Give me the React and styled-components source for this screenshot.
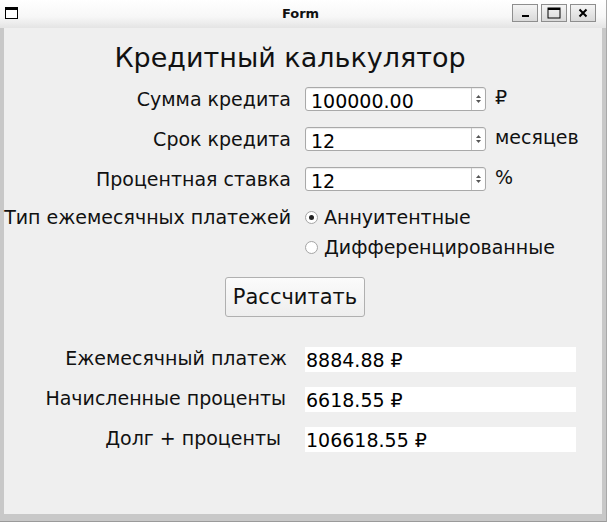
import React from 'react'
import styled, { createGlobalStyle } from 'styled-components'

const GlobalStyle = createGlobalStyle`
  html, body { margin: 0; padding: 0; background: #ffffff; }
  body { font-family: "DejaVu Sans", "Liberation Sans", sans-serif; color: #000; }
`

const Window = styled.div`
  width: 607px;
  height: 522px;
  display: flex;
  flex-direction: column;
  background: #c8c8c8;
  box-sizing: border-box;
  border-bottom: 1px solid #9a9a9a;
  border-right: 1px solid #a8a8a8;
`

const TitleBar = styled.div`
  height: 28px;
  flex: 0 0 28px;
  display: grid;
  grid-template-columns: 1fr auto 1fr;
  align-items: center;
  background: linear-gradient(#ffffff 0%, #f7f7f7 60%, #e4e4e4 100%);
  box-sizing: border-box;
  padding: 0 10px 0 5px;
`

const AppIcon = styled.div`
  width: 13px;
  height: 12px;
  box-sizing: border-box;
  border: 1px solid #000;
  border-top-width: 3px;
  background: #fff;
  margin-top: -2px;
`

const Caption = styled.div`
  font-size: 13px;
  font-weight: bold;
  color: #111;
  margin-top: -2px;
`

const Controls = styled.div`
  justify-self: end;
  display: flex;
  gap: 3px;
  margin-top: -2px;
`

const CtlButton = styled.div`
  width: 26px;
  height: 18px;
  box-sizing: border-box;
  border: 1px solid #8e8e8e;
  background: linear-gradient(#f4f4f4, #d9d9d9);
  display: flex;
  align-items: center;
  justify-content: center;
`

const Body = styled.div`
  flex: 1;
  margin: 0 4px 7px 4px;
  background: #efefef;
  display: flex;
  flex-direction: column;
  padding-top: 14px;
`

const Heading = styled.h1`
  margin: 0;
  font-weight: normal;
  font-size: 27px;
  line-height: 32px;
  text-align: center;
  padding-right: 26px;
  color: #111;
`

const Form = styled.div`
  display: grid;
  grid-template-columns: 287px 181px 1fr;
  column-gap: 14px;
  row-gap: 16px;
  margin-top: 13px;
`

const Label = styled.div`
  font-size: 19px;
  text-align: right;
  white-space: nowrap;
  align-self: ${p => (p.$top ? 'start' : 'center')};
  line-height: 20px;
  color: #111;
`

const Row = styled.div`
  display: contents;
`

const SpinBox = styled.div`
  height: 24px;
  box-sizing: border-box;
  border: 1px solid #a9a9a9;
  border-radius: 3px;
  background: #fff;
  display: flex;
  box-shadow: inset 0 1px 1px rgba(0,0,0,0.08);
`

const SpinText = styled.div`
  flex: 1;
  font-size: 19px;
  line-height: 24px;
  padding: 1px 0 0 5px;
  color: #000;
`

const SpinArrows = styled.div`
  width: 13px;
  border-left: 1px solid #c4c4c4;
  display: flex;
  align-items: center;
  justify-content: center;
`

const Unit = styled.div`
  font-size: 19px;
  line-height: 20px;
  margin-left: -5px;
  margin-top: -4px;
  align-self: center;
  color: #111;
`

const Radios = styled.div`
  display: flex;
  flex-direction: column;
  gap: 10px;
`

const RadioLine = styled.div`
  display: flex;
  align-items: center;
  gap: 6px;
  font-size: 19px;
  line-height: 20px;
  white-space: nowrap;
  color: #111;
`

const RadioDot = styled.span`
  flex: 0 0 13px;
  width: 13px;
  height: 13px;
  box-sizing: border-box;
  border-radius: 50%;
  border: 1px solid #a6a6a6;
  background: radial-gradient(circle, #fff 60%, #f0f0f0 100%);
  display: flex;
  align-items: center;
  justify-content: center;
  &::after {
    content: '';
    width: 5px;
    height: 5px;
    border-radius: 50%;
    background: ${p => (p.$checked ? '#222' : 'transparent')};
  }
`

const ButtonRow = styled.div`
  display: flex;
  justify-content: center;
  padding-right: 16px;
  margin-top: 20px;
`

const CalcButton = styled.button`
  width: 140px;
  height: 40px;
  font-family: inherit;
  font-size: 21px;
  color: #111;
  border: 1px solid #b0b0b0;
  border-radius: 3px;
  background: linear-gradient(#fbfbfb, #eeeeee);
  padding: 0;
`

const Results = styled.div`
  display: grid;
  grid-template-columns: 283px 271px;
  column-gap: 18px;
  row-gap: 15px;
  margin-top: 30px;
`

const ResultLabel = styled(Label)`
  padding-right: ${p => p.$pr || 0}px;
  margin-top: -3px;
`

const ResultValue = styled.div`
  height: 25px;
  background: #fff;
  font-size: 19px;
  line-height: 26px;
  padding-left: 1px;
  color: #000;
`

const ArrowsIcon = () => (
  <svg width="7" height="12" viewBox="0 0 7 12">
    <path d="M1 5 L3.5 2 L6 5 Z" fill="#555" />
    <path d="M1 7 L3.5 10 L6 7 Z" fill="#555" />
  </svg>
)

const Spin = ({ value }) => (
  <SpinBox>
    <SpinText>{value}</SpinText>
    <SpinArrows><ArrowsIcon /></SpinArrows>
  </SpinBox>
)

const inputs = [
  { label: 'Сумма кредита', value: '100000.00', unit: '₽' },
  { label: 'Срок кредита', value: '12', unit: 'месяцев' },
  { label: 'Процентная ставка', value: '12', unit: '%' },
]

const results = [
  { label: 'Ежемесячный платеж', value: '8884.88 ₽', pr: 0 },
  { label: 'Начисленные проценты', value: '6618.55 ₽', pr: 1 },
  { label: 'Долг + проценты', value: '106618.55 ₽', pr: 6 },
]

export default function App() {
  return (
    <>
      <GlobalStyle />
      <Window>
        <TitleBar>
          <AppIcon />
          <Caption>Form</Caption>
          <Controls>
            <CtlButton>
              <svg width="10" height="10" viewBox="0 0 10 10"><rect x="2" y="7" width="7" height="2" fill="#000" /></svg>
            </CtlButton>
            <CtlButton>
              <svg width="14" height="12" viewBox="0 0 14 12"><rect x="1" y="1" width="12" height="10" fill="none" stroke="#000" strokeWidth="1" /><rect x="1" y="1" width="12" height="2" fill="#000" /></svg>
            </CtlButton>
            <CtlButton>
              <svg width="10" height="10" viewBox="0 0 10 10"><path d="M1.5 1.5 L8.5 8.5 M8.5 1.5 L1.5 8.5" stroke="#000" strokeWidth="2" /></svg>
            </CtlButton>
          </Controls>
        </TitleBar>
        <Body>
          <Heading>Кредитный калькулятор</Heading>
          <Form>
            {inputs.map(i => (
              <Row key={i.label}>
                <Label>{i.label}</Label>
                <Spin value={i.value} />
                <Unit>{i.unit}</Unit>
              </Row>
            ))}
            <Row>
              <Label $top>Тип ежемесячных платежей</Label>
              <Radios>
                <RadioLine><RadioDot $checked />Аннуитентные</RadioLine>
                <RadioLine><RadioDot />Дифференцированные</RadioLine>
              </Radios>
              <div />
            </Row>
          </Form>
          <ButtonRow>
            <CalcButton>Рассчитать</CalcButton>
          </ButtonRow>
          <Results>
            {results.map(r => (
              <Row key={r.label}>
                <ResultLabel $pr={r.pr}>{r.label}</ResultLabel>
                <ResultValue>{r.value}</ResultValue>
              </Row>
            ))}
          </Results>
        </Body>
      </Window>
    </>
  )
}
